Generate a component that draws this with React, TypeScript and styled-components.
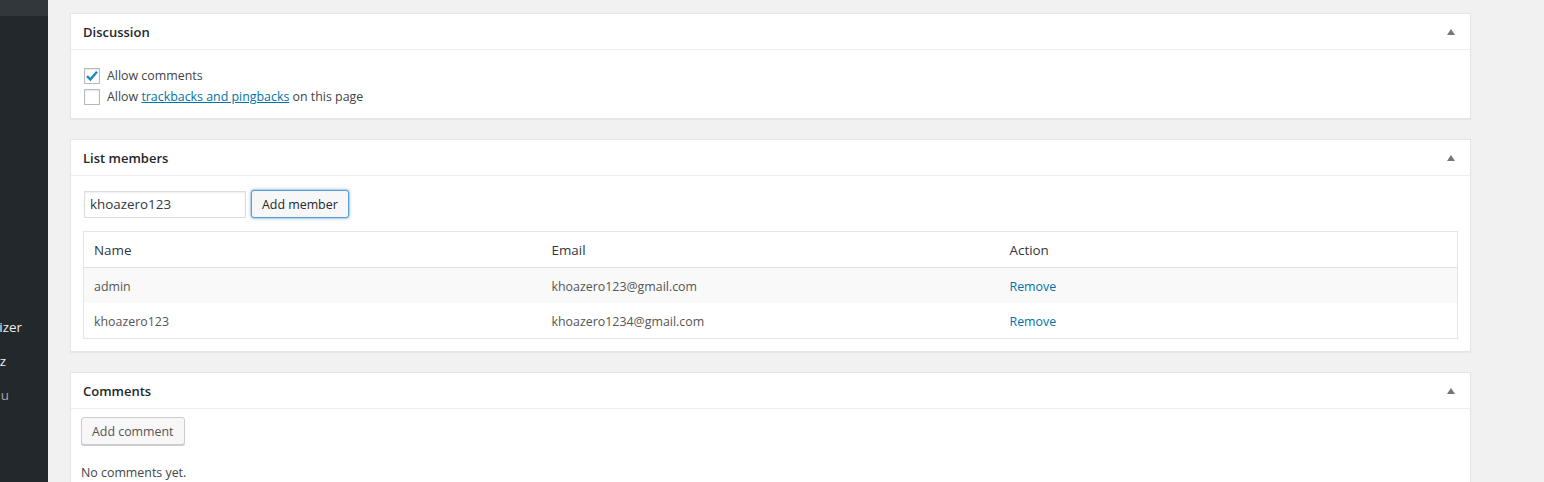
import styled, { createGlobalStyle } from 'styled-components';

const GlobalStyle = createGlobalStyle`
  html, body {
    margin: 0;
    padding: 0;
    background: #f1f1f1;
    font-family: "Open Sans", "Liberation Sans", sans-serif;
    font-size: 12.4px;
    color: #444;
  }
`;

const Layout = styled.div`
  display: flex;
  height: 482px;
  overflow: hidden;
`;

const Sidebar = styled.nav`
  width: 48px;
  min-width: 0;
  flex: 0 0 48px;
  overflow: hidden;
  background: #23282d;
  display: flex;
  flex-direction: column;
`;

const SidebarTop = styled.div`
  height: 16px;
  background: #32373c;
`;

const SideItem = styled.div<{ $muted?: boolean; $shift: number }>`
  height: 34px;
  min-width: 0;
  display: flex;
  align-items: center;
  justify-content: flex-end;
  overflow: hidden;
  padding-right: ${({ $shift }) => $shift}px;
  white-space: nowrap;
  font-size: 13.4px;
  color: ${({ $muted }) => ($muted ? '#a0a5aa' : '#eee')};
`;

const SideSpacer = styled.div`
  height: 294px;
`;

const Main = styled.main`
  padding: 13px 0 0 22px;
  width: 1401px;
  display: flex;
  flex-direction: column;
  gap: 20px;
`;

const Postbox = styled.section`
  background: #fff;
  border: 1px solid #e5e5e5;
  box-shadow: 0 1px 1px rgba(0, 0, 0, 0.04);
`;

const PostboxHeader = styled.div`
  height: 35px;
  padding: 0 12px;
  border-bottom: 1px solid #eee;
  display: flex;
  align-items: center;
  justify-content: space-between;
`;

const Title = styled.h2`
  margin: 0;
  font-size: 13px;
  font-weight: 600;
  color: #23282d;
`;

const Toggle = styled.span`
  width: 0;
  height: 0;
  margin-right: 3px;
  border-left: 4px solid transparent;
  border-right: 4px solid transparent;
  border-bottom: 6px solid #72777c;
`;

const Inside = styled.div<{ $pad: string }>`
  padding: ${({ $pad }) => $pad};
`;

const CheckRow = styled.label`
  display: flex;
  align-items: center;
  height: 21px;
  gap: 7px;
  padding-left: 1px;
`;

const Box = styled.span`
  width: 14px;
  height: 14px;
  border: 1px solid #b4b9be;
  background: #fff;
  box-shadow: inset 0 1px 2px rgba(0, 0, 0, 0.1);
  display: flex;
  align-items: center;
  justify-content: center;
`;

const Link = styled.a`
  color: #0073aa;
  text-decoration: underline;
`;

const FormRow = styled.div`
  display: flex;
  align-items: center;
  gap: 5px;
  padding-left: 1px;
  margin-bottom: 13px;
`;

const Input = styled.input`
  box-sizing: border-box;
  width: 162px;
  height: 27px;
  padding: 3px 5px;
  border: 1px solid #ddd;
  box-shadow: inset 0 1px 2px rgba(0, 0, 0, 0.07);
  font-family: inherit;
  font-size: 13.4px;
  color: #32373c;
  outline: none;
`;

const Button = styled.button<{ $focus?: boolean }>`
  box-sizing: border-box;
  height: 28px;
  padding: 1px 10px 0;
  border-radius: 3px;
  font-family: inherit;
  font-size: 12.4px;
  background: #f7f7f7;
  color: ${({ $focus }) => ($focus ? '#23282d' : '#555')};
  border: 1px solid ${({ $focus }) => ($focus ? '#5b9dd9' : '#ccc')};
  box-shadow: ${({ $focus }) => ($focus ? '0 0 3px rgba(0, 115, 170, 0.8)' : '0 1px 0 #ccc')};
`;

const Table = styled.table`
  width: 100%;
  border-collapse: collapse;
  border: 1px solid #e5e5e5;
  table-layout: fixed;
`;

const Th = styled.th`
  height: 35px;
  padding: 0 10px;
  text-align: left;
  font-size: 13.4px;
  font-weight: 400;
  color: #32373c;
  border-bottom: 1px solid #e1e1e1;
`;

const Tr = styled.tr<{ $alt?: boolean }>`
  background: ${({ $alt }) => ($alt ? '#f9f9f9' : '#fff')};
`;

const Td = styled.td`
  height: 34px;
  padding: 1px 10px 0;
  color: #555;
`;

const RemoveLink = styled.a`
  color: #0073aa;
  text-decoration: none;
`;

const Empty = styled.p`
  margin: 19px 0 0;
  color: #444;
`;

const members = [
  { name: 'admin', email: 'khoazero123@gmail.com' },
  { name: 'khoazero123', email: 'khoazero1234@gmail.com' },
];

const Check = () => (
  <svg width="14" height="14" viewBox="0 0 14 14">
    <path d="M2 7.2 L5.4 10.4 L12 2.8" fill="none" stroke="#1e8cbe" strokeWidth="2.4" />
  </svg>
);

export default function App() {
  return (
    <>
      <GlobalStyle />
      <Layout>
        <Sidebar>
          <SidebarTop />
          <SideSpacer />
          <SideItem $shift={26}>Optimizer</SideItem>
          <SideItem $shift={42}>Quiz</SideItem>
          <SideItem $shift={39} $muted>Collapse menu</SideItem>
        </Sidebar>
        <Main>
          <Postbox>
            <PostboxHeader>
              <Title>Discussion</Title>
              <Toggle />
            </PostboxHeader>
            <Inside $pad="15px 12px 11px">
              <CheckRow>
                <Box><Check /></Box>
                Allow comments
              </CheckRow>
              <CheckRow>
                <Box />
                <span>
                  Allow <Link href="#">trackbacks and pingbacks</Link> on this page
                </span>
              </CheckRow>
            </Inside>
          </Postbox>

          <Postbox>
            <PostboxHeader>
              <Title>List members</Title>
              <Toggle />
            </PostboxHeader>
            <Inside $pad="14px 12px 12px">
              <FormRow>
                <Input defaultValue="khoazero123" />
                <Button $focus>Add member</Button>
              </FormRow>
              <Table>
                <thead>
                  <tr>
                    <Th>Name</Th>
                    <Th>Email</Th>
                    <Th>Action</Th>
                  </tr>
                </thead>
                <tbody>
                  {members.map((m, i) => (
                    <Tr key={m.name} $alt={i % 2 === 0}>
                      <Td>{m.name}</Td>
                      <Td>{m.email}</Td>
                      <Td><RemoveLink href="#">Remove</RemoveLink></Td>
                    </Tr>
                  ))}
                </tbody>
              </Table>
            </Inside>
          </Postbox>

          <Postbox>
            <PostboxHeader>
              <Title>Comments</Title>
              <Toggle />
            </PostboxHeader>
            <Inside $pad="8px 10px 12px">
              <Button>Add comment</Button>
              <Empty>No comments yet.</Empty>
            </Inside>
          </Postbox>
        </Main>
      </Layout>
    </>
  );
}
